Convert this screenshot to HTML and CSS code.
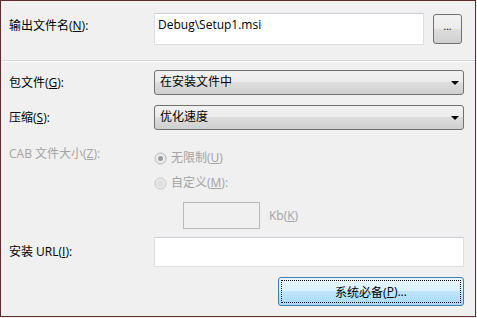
FILE: index.html
```html
<!DOCTYPE html>
<html>
<head>
  <meta charset="UTF-8">
  <title>属性</title>
  <link rel="stylesheet" href="styles.css">
</head>
<body>
  <div class="dialogo">
    <div class="cabecera">
      <label class="etiqueta">输出文件名(<u>N</u>):</label>
      <div class="caja caja-salida">Debug\Setup1.msi</div>
      <button class="boton-mas">...</button>
    </div>

    <div class="formulario">
      <div class="fila">
        <label class="etiqueta">包文件(<u>G</u>):</label>
        <div class="combo">在安装文件中<span class="flecha"></span></div>
      </div>

      <div class="fila">
        <label class="etiqueta">压缩(<u>S</u>):</label>
        <div class="combo">优化速度<span class="flecha"></span></div>
      </div>

      <div class="fila fila-cab">
        <label class="etiqueta desactivado">CAB 文件大小(<u>Z</u>):</label>
        <div class="opciones">
          <div class="opcion opcion-1">
            <svg width="13" height="13" viewBox="0 0 13 13">
              <circle cx="6.5" cy="6.5" r="5.5" fill="#f4f4f4" stroke="#b4b4b4"/>
              <circle cx="6.5" cy="6.5" r="4" fill="none" stroke="#e2e2e2"/>
              <circle cx="6.5" cy="6.5" r="2.5" fill="#9a9a9a"/>
            </svg>
            <span class="desactivado">无限制(<u>U</u>)</span>
          </div>
          <div class="opcion opcion-2">
            <svg width="13" height="13" viewBox="0 0 13 13">
              <circle cx="6.5" cy="6.5" r="5.5" fill="#ececec" stroke="#c4c4c4"/>
              <circle cx="6.5" cy="6.5" r="3.5" fill="#e0e0e0"/>
            </svg>
            <span class="desactivado">自定义(<u>M</u>):</span>
          </div>
          <div class="tamano">
            <div class="caja-kb"></div>
            <span class="desactivado">Kb(<u>K</u>)</span>
          </div>
        </div>
      </div>

      <div class="fila fila-url">
        <label class="etiqueta">安装 URL(<u>I</u>):</label>
        <div class="caja caja-url"></div>
      </div>

      <div class="fila fila-boton">
        <button class="boton-requisitos"><span>系统必备(<u>P</u>)...</span></button>
      </div>
    </div>
  </div>
</body>
</html>
```

FILE: styles.css
```css
/* Estilos generales */
body {
  margin: 0;
  padding: 0;
  background: #f0f0f0;
}

.dialogo {
  width: 476px;
  height: 317px;
  box-sizing: border-box;
  border: 1px solid #5c2e2e;
  background: #f0f0f0;
  font-family: 'Open Sans', 'Noto Sans CJK SC', sans-serif;
  font-size: 12px;
  line-height: 16px;
  color: #000;
}

u {
  text-decoration: underline;
  text-underline-offset: 1px;
}

.etiqueta {
  width: 145px;
  flex-shrink: 0;
}

.desactivado {
  color: #a3a3a3;
}

/* Parte superior */
.cabecera {
  display: flex;
  align-items: flex-start;
  height: 60px;
  box-sizing: border-box;
  padding: 12px 0 0 8px;
  border-bottom: 1px solid #d6d6d6;
  box-shadow: 0 1px 0 #fff;
}

.cabecera .etiqueta {
  margin-top: 5px;
}

.caja {
  background: #fff;
  border: 1px solid #dcdfe4;
  border-top-color: #c9ccd2;
  box-sizing: border-box;
}

.caja-salida {
  width: 270px;
  height: 32px;
  padding: 3px 3px;
}

.boton-mas {
  width: 29px;
  height: 30px;
  margin: 1px 0 0 9px;
  padding: 0 0 6px;
  border: 1px solid #707070;
  border-radius: 3px;
  background: linear-gradient(#f2f2f2 0%, #ebebeb 50%, #dddddd 50%, #cfcfcf 100%);
  font-family: 'Open Sans', sans-serif;
  font-size: 10px;
  line-height: 10px;
  color: #000;
}

/* Formulario */
.formulario {
  padding: 9px 0 0 8px;
}

.fila {
  display: flex;
  align-items: center;
  margin-bottom: 10px;
}

.combo {
  position: relative;
  width: 310px;
  height: 25px;
  box-sizing: border-box;
  padding: 3px 5px;
  border: 1px solid #707070;
  border-radius: 3px;
  background: linear-gradient(#f2f2f2 0%, #ebebeb 50%, #dddddd 50%, #cfcfcf 100%);
}

.flecha {
  position: absolute;
  right: 4px;
  top: 10px;
  width: 0;
  height: 0;
  border-left: 4px solid transparent;
  border-right: 4px solid transparent;
  border-top: 4px solid #000;
}

.fila-cab {
  align-items: flex-start;
  margin-top: 16px;
  margin-bottom: 0;
}

.opciones {
  display: flex;
  flex-direction: column;
}

.opcion {
  display: flex;
  align-items: center;
  gap: 4px;
}

.opcion-1 {
  margin-top: 4px;
}

.opcion-2 {
  margin-top: 9px;
}

.tamano {
  display: flex;
  align-items: center;
  gap: 9px;
  margin: 11px 0 0 29px;
}

.caja-kb {
  width: 77px;
  height: 27px;
  box-sizing: border-box;
  border: 1px solid #b9b9b9;
  background: #f0f0f0;
}

.fila-url {
  margin-top: 8px;
}

.caja-url {
  width: 310px;
  height: 30px;
}

.fila-boton {
  justify-content: flex-end;
  width: 455px;
  margin-top: 10px;
}

.boton-requisitos {
  width: 186px;
  height: 29px;
  padding: 2px;
  border: 1px solid #3c7fb1;
  border-radius: 3px;
  background: linear-gradient(#eaf6fd 0%, #d9f0fc 50%, #bee6fd 50%, #a7d9f5 100%);
  font-family: 'Open Sans', 'Noto Sans CJK SC', sans-serif;
  font-size: 12px;
  color: #000;
}

.boton-requisitos span {
  display: flex;
  align-items: center;
  justify-content: center;
  height: 100%;
  box-sizing: border-box;
  border: 1px dotted #000;
}
```
